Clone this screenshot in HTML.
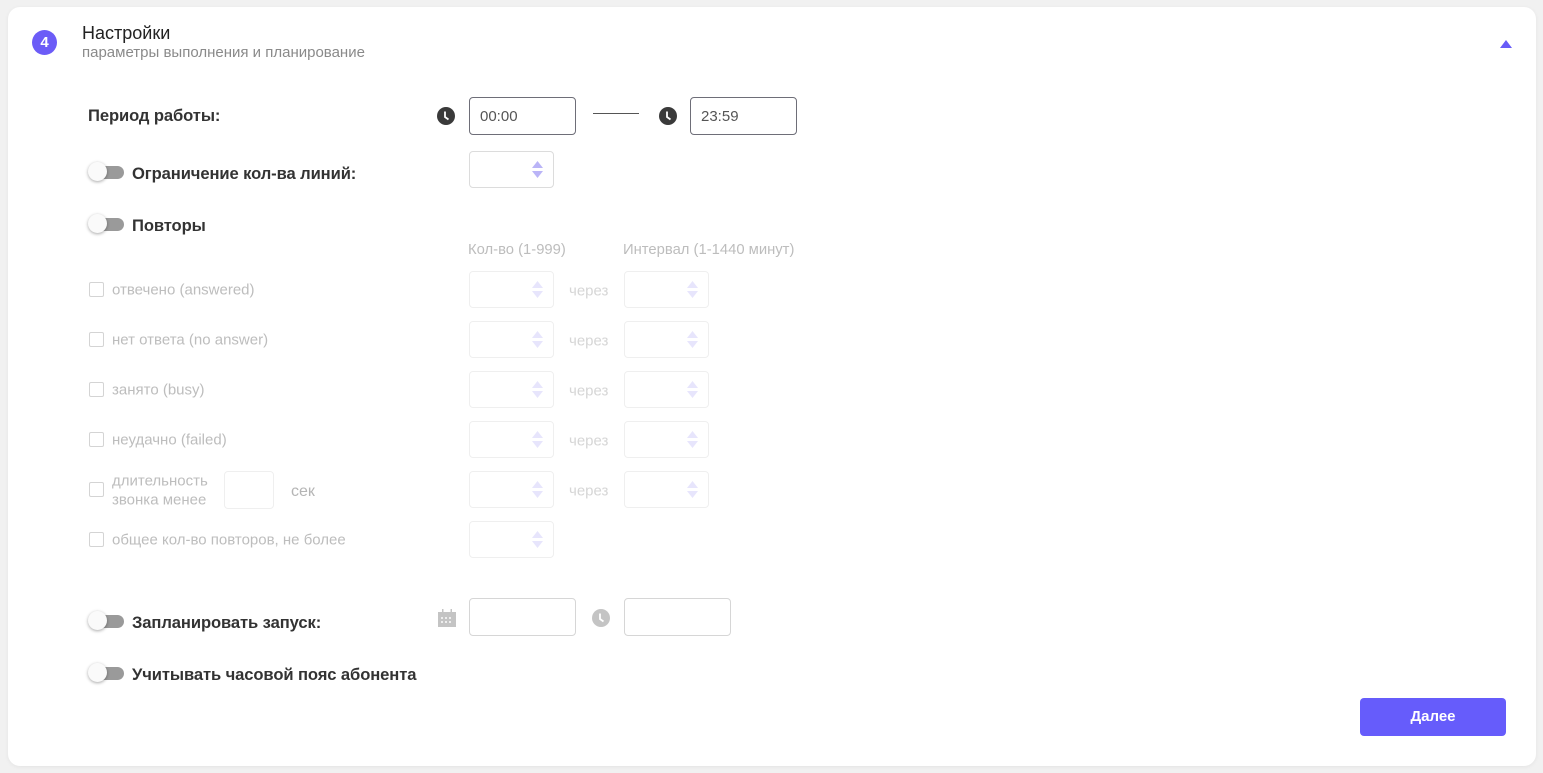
<!DOCTYPE html>
<html><head><meta charset="utf-8">
<style>
*{box-sizing:border-box;margin:0;padding:0}
body{width:1543px;height:773px;background:#f1f1f1;font-family:"Liberation Sans",sans-serif;position:relative;overflow:hidden}
.card{position:absolute;left:8px;top:7px;width:1528px;height:759px;background:#fff;border-radius:12px;box-shadow:0 1px 4px rgba(0,0,0,.06)}
.a{position:absolute;white-space:nowrap}
.lbl{font-size:16.6px;color:#333;font-weight:bold;letter-spacing:-.1px;transform:translateY(-50%);margin-top:2px}
.g{font-size:15px;color:#bdbdbd;transform:translateY(-50%);margin-top:1px}
.inp{position:absolute;border:1px solid #6e6e78;border-radius:4px;background:#fff}
.inp2{position:absolute;border:1px solid #d6d6d6;border-radius:4px;background:#fff}
.sp{position:absolute;width:85px;height:37px;border:1px solid #efefef;border-radius:4px;background:#fff}
.sp.act{border-color:#dcdcdc}
.sp svg{position:absolute;right:10px;top:9px}
.tg{position:absolute;width:38px;height:20px}
.tg .tr{position:absolute;left:8px;top:3px;width:28px;height:13px;border-radius:7px;background:#9a9a9a}
.tg .kn{position:absolute;left:0;top:-1px;width:19px;height:19px;border-radius:50%;background:#fafafa;box-shadow:0 1px 3px rgba(0,0,0,.35)}
.cb{position:absolute;width:15px;height:15px;border:1.5px solid #d4d4d4;border-radius:2px}
</style></head><body>
<div class="card"></div>

<div class="a" style="left:32px;top:30px;width:25px;height:25px;border-radius:50%;background:#6c5cf7;color:#fff;font-weight:bold;font-size:15px;text-align:center;line-height:25px">4</div>
<div class="a" style="left:82px;top:23px;font-size:18px;color:#222">Настройки</div>
<div class="a" style="left:82px;top:44px;font-size:15px;color:#8a8a8a">параметры выполнения и планирование</div>
<svg class="a" style="left:1500px;top:40px" width="12" height="8"><path d="M6 0L12 8H0Z" fill="#675bf8"/></svg>

<div class="a lbl" style="left:88px;top:114px">Период работы:</div>
<svg class="a" style="left:437px;top:107px" width="18" height="18" viewBox="0 0 18 18"><circle cx="9" cy="9" r="9" fill="#3a3a3a"/><path d="M8 4.5V10L11.5 12.5" stroke="#fff" stroke-width="1.8" fill="none"/></svg>
<div class="inp" style="left:469px;top:97px;width:107px;height:38px"></div>
<div class="a" style="left:480px;top:108px;font-size:15px;color:#555">00:00</div>
<div class="a" style="left:593px;top:113px;width:46px;height:1px;background:#555"></div>
<svg class="a" style="left:659px;top:107px" width="18" height="18" viewBox="0 0 18 18"><circle cx="9" cy="9" r="9" fill="#3a3a3a"/><path d="M8 4.5V10L11.5 12.5" stroke="#fff" stroke-width="1.8" fill="none"/></svg>
<div class="inp" style="left:690px;top:97px;width:107px;height:38px"></div>
<div class="a" style="left:701px;top:108px;font-size:15px;color:#555">23:59</div>

<div class="tg" style="left:88px;top:163px"><div class="tr"></div><div class="kn"></div></div>
<div class="a lbl" style="left:132px;top:172px">Ограничение кол-ва линий:</div>
<div class="sp act" style="left:469px;top:151px;height:37px"><svg width="11" height="17"><path d="M5.5 0L11 7H0Z M5.5 17L11 10H0Z" fill="#bab4f7"/></svg></div>

<div class="tg" style="left:88px;top:215px"><div class="tr"></div><div class="kn"></div></div>
<div class="a lbl" style="left:132px;top:224px">Повторы</div>

<div class="a g" style="left:468px;top:249px;font-size:14.8px">Кол-во (1-999)</div>
<div class="a g" style="left:623px;top:249px;font-size:14.8px">Интервал (1-1440 минут)</div>

<div class="cb" style="left:89px;top:282px"></div><div class="a g" style="left:112px;top:289px">отвечено (answered)</div>
<div class="sp" style="left:469px;top:271px"><svg width="11" height="17"><path d="M5.5 0L11 7H0Z M5.5 17L11 10H0Z" fill="#e7e5fc"/></svg></div>
<div class="a g" style="left:569px;top:290px;color:#d6d6d6">через</div>
<div class="sp" style="left:624px;top:271px"><svg width="11" height="17"><path d="M5.5 0L11 7H0Z M5.5 17L11 10H0Z" fill="#e7e5fc"/></svg></div>

<div class="cb" style="left:89px;top:332px"></div><div class="a g" style="left:112px;top:339px">нет ответа (no answer)</div>
<div class="sp" style="left:469px;top:321px"><svg width="11" height="17"><path d="M5.5 0L11 7H0Z M5.5 17L11 10H0Z" fill="#e7e5fc"/></svg></div>
<div class="a g" style="left:569px;top:340px;color:#d6d6d6">через</div>
<div class="sp" style="left:624px;top:321px"><svg width="11" height="17"><path d="M5.5 0L11 7H0Z M5.5 17L11 10H0Z" fill="#e7e5fc"/></svg></div>

<div class="cb" style="left:89px;top:382px"></div><div class="a g" style="left:112px;top:389px">занято (busy)</div>
<div class="sp" style="left:469px;top:371px"><svg width="11" height="17"><path d="M5.5 0L11 7H0Z M5.5 17L11 10H0Z" fill="#e7e5fc"/></svg></div>
<div class="a g" style="left:569px;top:390px;color:#d6d6d6">через</div>
<div class="sp" style="left:624px;top:371px"><svg width="11" height="17"><path d="M5.5 0L11 7H0Z M5.5 17L11 10H0Z" fill="#e7e5fc"/></svg></div>

<div class="cb" style="left:89px;top:432px"></div><div class="a g" style="left:112px;top:439px">неудачно (failed)</div>
<div class="sp" style="left:469px;top:421px"><svg width="11" height="17"><path d="M5.5 0L11 7H0Z M5.5 17L11 10H0Z" fill="#e7e5fc"/></svg></div>
<div class="a g" style="left:569px;top:440px;color:#d6d6d6">через</div>
<div class="sp" style="left:624px;top:421px"><svg width="11" height="17"><path d="M5.5 0L11 7H0Z M5.5 17L11 10H0Z" fill="#e7e5fc"/></svg></div>

<div class="cb" style="left:89px;top:482px"></div>
<div class="a g" style="left:112px;top:480px">длительность</div>
<div class="a g" style="left:112px;top:499px">звонка менее</div>
<div class="a" style="left:224px;top:471px;width:50px;height:38px;border:1px solid #efefef;border-radius:4px"></div>
<div class="a g" style="left:291px;top:491px;font-size:16px;color:#b5b5b5">сек</div>
<div class="sp" style="left:469px;top:471px"><svg width="11" height="17"><path d="M5.5 0L11 7H0Z M5.5 17L11 10H0Z" fill="#e7e5fc"/></svg></div>
<div class="a g" style="left:569px;top:490px;color:#d6d6d6">через</div>
<div class="sp" style="left:624px;top:471px"><svg width="11" height="17"><path d="M5.5 0L11 7H0Z M5.5 17L11 10H0Z" fill="#e7e5fc"/></svg></div>

<div class="cb" style="left:89px;top:532px"></div><div class="a g" style="left:112px;top:539px">общее кол-во повторов, не более</div>
<div class="sp" style="left:469px;top:521px"><svg width="11" height="17"><path d="M5.5 0L11 7H0Z M5.5 17L11 10H0Z" fill="#e7e5fc"/></svg></div>

<div class="tg" style="left:88px;top:612px"><div class="tr"></div><div class="kn"></div></div>
<div class="a lbl" style="left:132px;top:621px">Запланировать запуск:</div>
<svg class="a" style="left:438px;top:609px" width="18" height="18" viewBox="0 0 18 18"><rect x="0" y="3" width="18" height="15" fill="#c4c4c4"/><rect x="4" y="0" width="1.5" height="4" fill="#c4c4c4"/><rect x="12.5" y="0" width="1.5" height="4" fill="#c4c4c4"/><g fill="#eee"><rect x="3" y="8" width="2" height="2"/><rect x="7" y="8" width="2" height="2"/><rect x="11" y="8" width="2" height="2"/><rect x="3" y="12" width="2" height="2"/><rect x="7" y="12" width="2" height="2"/><rect x="11" y="12" width="2" height="2"/></g></svg>
<div class="inp2" style="left:469px;top:598px;width:107px;height:38px"></div>
<svg class="a" style="left:592px;top:609px" width="18" height="18" viewBox="0 0 18 18"><circle cx="9" cy="9" r="9" fill="#c4c4c4"/><path d="M8 4.5V10L11.5 12.5" stroke="#fff" stroke-width="1.8" fill="none"/></svg>
<div class="inp2" style="left:624px;top:598px;width:107px;height:38px"></div>

<div class="tg" style="left:88px;top:664px"><div class="tr"></div><div class="kn"></div></div>
<div class="a lbl" style="left:132px;top:673px">Учитывать часовой пояс абонента</div>

<div class="a" style="left:1360px;top:698px;width:146px;height:38px;background:#665cfb;border-radius:4px;color:#fff;font-size:15px;font-weight:bold;text-align:center;line-height:38px">Далее</div>
</body></html>
